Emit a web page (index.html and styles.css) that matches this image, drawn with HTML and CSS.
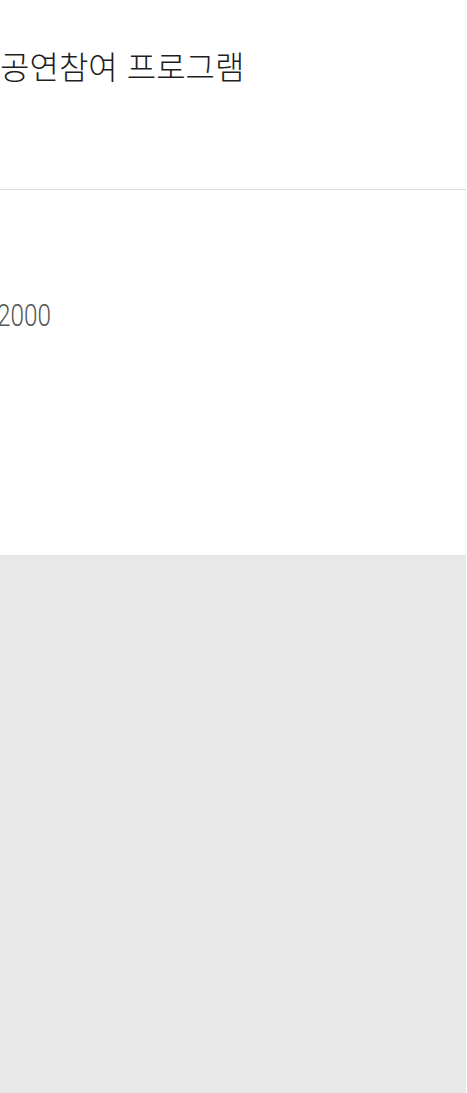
FILE: index.html
```html
<!DOCTYPE html>
<html lang="ko">
<head>
<meta charset="utf-8">
<link rel="stylesheet" href="styles.css">
</head>
<body>
<div class="page">
  <header class="head">
    <h1 class="title">공연참여 프로그램</h1>
  </header>
  <section class="body">
    <p class="year"><span class="year-num">2000</span></p>
  </section>
  <footer class="foot"></footer>
</div>
</body>
</html>
```
FILE: styles.css
```css
html, body {
  margin: 0;
  padding: 0;
  background: #fff;
}
.page {
  width: 466px;
  min-height: 1093px;
  display: flex;
  flex-direction: column;
  font-family: "Noto Sans CJK KR", "Noto Sans", sans-serif;
}
.head {
  box-sizing: border-box;
  height: 190px;
  border-bottom: 1px solid #dadada;
  padding-top: 42px;
}
.title {
  margin: 0;
  font-size: 32px;
  font-weight: 300;
  color: #1e1e1e;
  line-height: 46px;
  letter-spacing: 0;
  white-space: nowrap;
}
.body {
  box-sizing: border-box;
  height: 365px;
  padding-top: 103px;
}
.year {
  margin: 0;
  font-family: Roboto, "Noto Sans", sans-serif;
  font-weight: 300;
  font-size: 32px;
  line-height: 44px;
  color: #555;
}
.year-num {
  display: inline-block;
  margin-left: -3px;
  transform: scaleX(0.76);
  transform-origin: left center;
}
.foot {
  flex: 1;
  background: #e8e8e8;
  border-top: 1px solid #e3e3e3;
}
```
